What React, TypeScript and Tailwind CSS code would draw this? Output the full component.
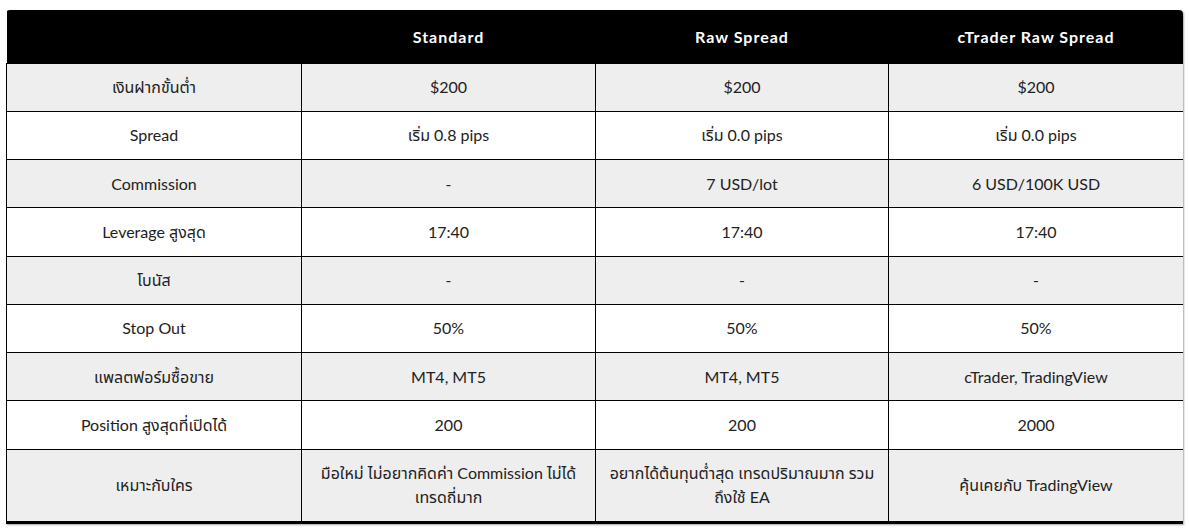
import React from "react";

const rows: [string, string, string, string][] = [
  ["เงินฝากขั้นต่ำ", "$200", "$200", "$200"],
  ["Spread", "เริ่ม 0.8 pips", "เริ่ม 0.0 pips", "เริ่ม 0.0 pips"],
  ["Commission", "-", "7 USD/lot", "6 USD/100K USD"],
  ["Leverage สูงสุด", "17:40", "17:40", "17:40"],
  ["โบนัส", "-", "-", "-"],
  ["Stop Out", "50%", "50%", "50%"],
  ["แพลตฟอร์มซื้อขาย", "MT4, MT5", "MT4, MT5", "cTrader, TradingView"],
  ["Position สูงสุดที่เปิดได้", "200", "200", "2000"],
];

export default function App() {
  return (
    <div
      className="bg-white w-[1190px] h-[531px] pt-[10px] pl-[6px]"
      style={{ fontFamily: 'Lato, "Noto Sans", "Noto Sans Thai", sans-serif' }}
    >
      <div className="w-[1177px] rounded-t-[4px] overflow-hidden border-b-2 border-black shadow-[1px_1px_2px_rgba(0,0,0,0.35)]">
        <table className="w-full border-collapse table-fixed text-[16px] text-[#222]">
          <colgroup>
            <col className="w-[295px]" />
            <col className="w-[294px]" />
            <col className="w-[293px]" />
            <col className="w-[295px]" />
          </colgroup>
          <thead>
            <tr className="bg-black text-white h-[53px]">
              <th className="font-bold"></th>
              <th className="font-bold text-center tracking-[1px] pt-[2px]">Standard</th>
              <th className="font-bold text-center tracking-[1px] pt-[2px]">Raw Spread</th>
              <th className="font-bold text-center tracking-[1px] pt-[2px]">cTrader Raw Spread</th>
            </tr>
          </thead>
          <tbody>
            {rows.map((r, i) => (
              <tr key={i} className={i % 2 === 0 ? "bg-[#eeeeee] h-[48.25px]" : "bg-white h-[48.25px]"}>
                {r.map((c, j) => (
                  <td key={j} className="border border-black text-center leading-[24px] px-2 py-0">
                    {c}
                  </td>
                ))}
              </tr>
            ))}
            <tr className="bg-[#eeeeee] h-[72px]">
              <td className="border border-black text-center leading-[24px] px-2">เหมาะกับใคร</td>
              <td className="border border-black text-center leading-[24px] px-1">
                มือใหม่ ไม่อยากคิดค่า Commission ไม่ได้
                <br />
                เทรดถี่มาก
              </td>
              <td className="border border-black text-center leading-[24px] px-1">
                อยากได้ต้นทุนต่ำสุด เทรดปริมาณมาก รวม
                <br />
                ถึงใช้ EA
              </td>
              <td className="border border-black text-center leading-[24px] px-2">คุ้นเคยกับ TradingView</td>
            </tr>
          </tbody>
        </table>
      </div>
    </div>
  );
}
